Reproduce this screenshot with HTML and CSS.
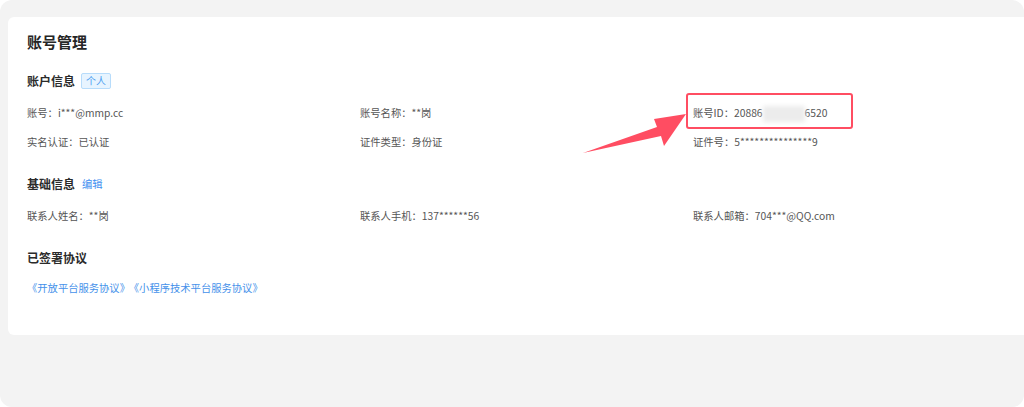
FILE: index.html
```html
<!DOCTYPE html>
<html lang="zh-CN">
<head>
<meta charset="utf-8">
<title>账号管理</title>
<link rel="stylesheet" href="styles.css">
</head>
<body>
<div class="frame">
  <div class="card">
    <h1 class="title">账号管理</h1>

    <div class="section-head">
      <span class="section-title">账户信息</span>
      <span class="badge">个人</span>
    </div>
    <div class="grid">
      <div class="cell">账号：i***@mmp.cc</div>
      <div class="cell">账号名称：**岗</div>
      <div class="cell">账号ID：20886<span class="masked"></span>6520</div>
      <div class="cell">实名认证：已认证</div>
      <div class="cell">证件类型：身份证</div>
      <div class="cell">证件号：5***************9</div>
    </div>

    <div class="section-head gap-top">
      <span class="section-title">基础信息</span>
      <a class="edit" href="#">编辑</a>
    </div>
    <div class="grid">
      <div class="cell">联系人姓名：**岗</div>
      <div class="cell">联系人手机：137******56</div>
      <div class="cell">联系人邮箱：704***@QQ.com</div>
    </div>

    <div class="section-head gap-top">
      <span class="section-title">已签署协议</span>
    </div>
    <div class="links">
      <a href="#">《开放平台服务协议》</a><a href="#">《小程序技术平台服务协议》</a>
    </div>

    <div class="highlight"></div>
  </div>
  <svg class="arrow" width="120" height="60" viewBox="575 105 120 60" xmlns="http://www.w3.org/2000/svg">
    <polygon points="583,153 657,127 654,119 686,114 664,146 661,136" fill="#ff4d62"/>
  </svg>
</div>
</body>
</html>
```

FILE: styles.css
```css
html, body {
  margin: 0;
  padding: 0;
  background: #ffffff;
  overflow: hidden;
}

body {
  width: 1024px;
  height: 407px;
  font-family: "Noto Sans CJK SC", "Noto Sans", sans-serif;
}

.frame {
  position: relative;
  width: 1024px;
  height: 407px;
  background: #f3f3f3;
  border-radius: 12px;
  padding: 17px 0 0 8px;
  box-sizing: border-box;
  overflow: hidden;
}

.card {
  position: relative;
  width: 1040px;
  height: 318px;
  background: #ffffff;
  border-radius: 6px 0 0 6px;
  padding: 13px 0 0 19px;
  box-sizing: border-box;
}

.title {
  margin: 0;
  font-size: 15px;
  line-height: 24px;
  font-weight: 700;
  color: #262626;
}

.section-head {
  display: flex;
  align-items: center;
  height: 20px;
  margin-top: 17px;
}

.section-head.gap-top {
  margin-top: 22px;
}

.section-title {
  font-size: 12px;
  font-weight: 700;
  color: #2b2b2b;
  line-height: 20px;
}

.badge {
  margin-left: 6px;
  height: 16px;
  padding: 0 4px;
  box-sizing: border-box;
  border: 1px solid #b7dcfb;
  background: #e7f4ff;
  color: #4c9ef0;
  font-size: 10px;
  line-height: 14px;
  border-radius: 2px;
}

.edit {
  margin-left: 7px;
  color: #3d8ef0;
  font-size: 10.3px;
  text-decoration: none;
  line-height: 20px;
}

.grid {
  display: grid;
  grid-template-columns: 333px 333px 333px;
  row-gap: 9px;
  margin-top: 12px;
}

.cell {
  font-size: 10.3px;
  line-height: 20px;
  color: #555555;
  white-space: nowrap;
}

.masked {
  display: inline-block;
  width: 42px;
  height: 16px;
  vertical-align: middle;
  background: #ececec;
  filter: blur(2px);
}

.links {
  margin-top: 10px;
  font-size: 10.3px;
  line-height: 20px;
}

.links a {
  color: #4591ea;
  text-decoration: none;
}

.links a + a {
  margin-left: 4px;
}

.highlight {
  position: absolute;
  left: 678px;
  top: 76px;
  width: 167px;
  height: 36px;
  box-sizing: border-box;
  border: 2.5px solid #ff4d62;
  border-radius: 3px;
}

.arrow {
  position: absolute;
  left: 575px;
  top: 105px;
}
```
